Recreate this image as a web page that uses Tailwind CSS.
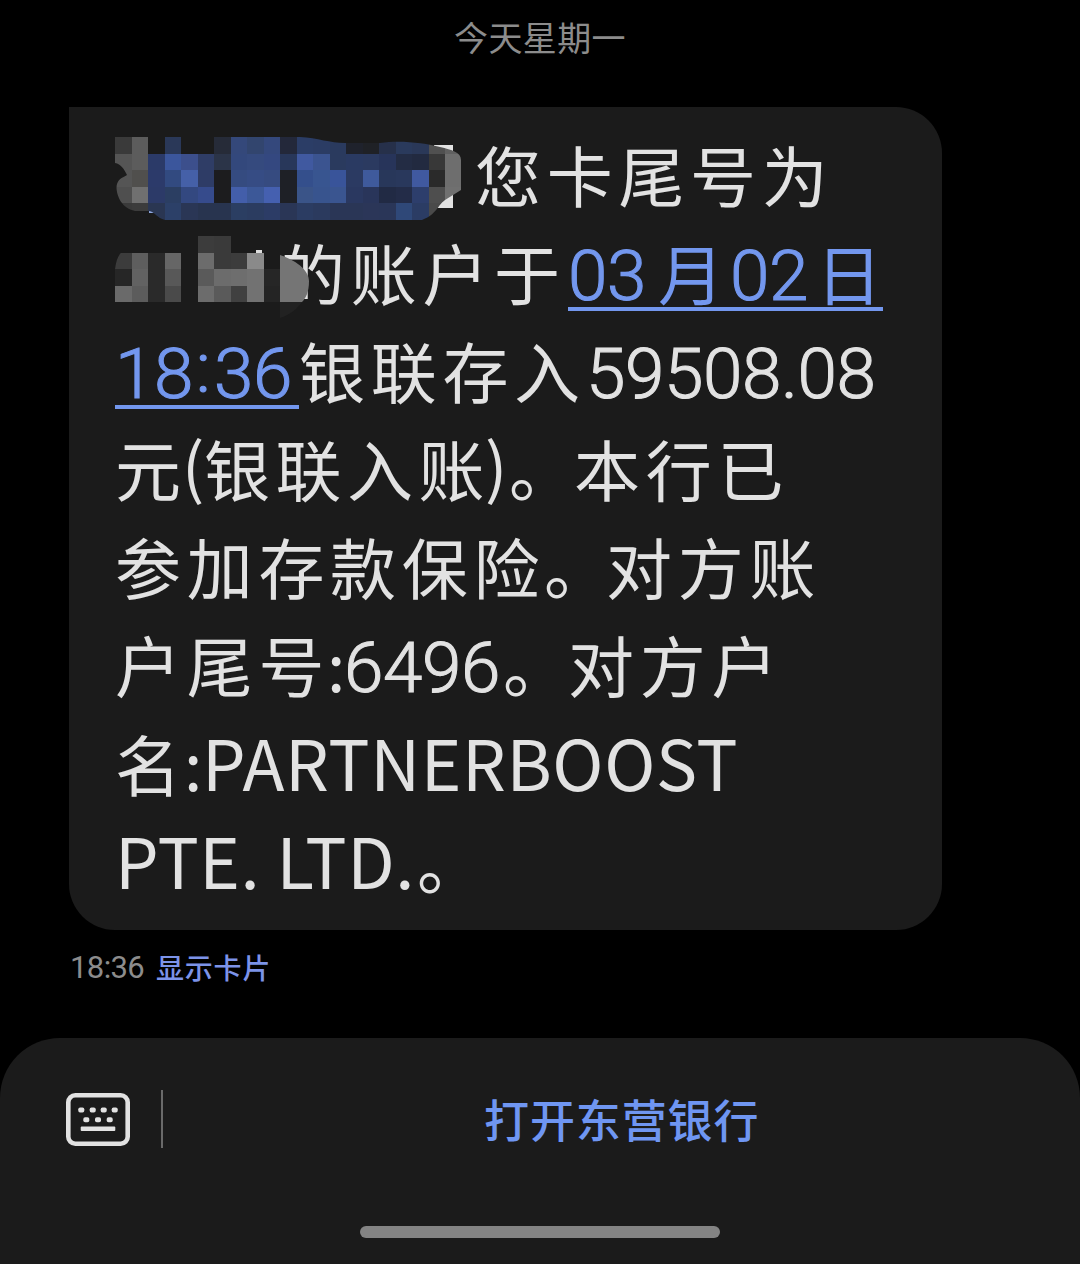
<!DOCTYPE html>
<html lang="zh-CN">
  <head>
    <meta charset="UTF-8" />
    <title>短信</title>
    <script src="https://cdn.jsdelivr.net/npm/@tailwindcss/browser@4"></script>
    <meta name="viewport" content="width=device-width, initial-scale=1.0" />
    <style>
      body { font-family: "Noto Sans CJK SC", sans-serif; }
      .num { font-family: Roboto, sans-serif; font-size: 71px; font-weight: 300; letter-spacing: -0.4px; -webkit-text-stroke: 1.1px currentColor; }
    </style>
  </head>
  <body class="bg-black">
    <div class="w-[1080px] h-[1264px] flex flex-col overflow-hidden">
      <!-- Date -->
      <div class="h-[107px] pt-[12px] text-center text-[34px] leading-[50px] tracking-[0.4px] text-[#8c8c8c]">今天星期一</div>

      <!-- Message bubble -->
      <div class="relative ml-[69px] w-[873px] h-[823px] pt-[17px] pl-[46px] rounded-[46px] rounded-tl-none bg-[#1b1b1b] text-[#e2e2e2] text-[66px] leading-[98px] tracking-[5.7px] whitespace-nowrap *:h-[98px]">
        <div class="flex items-baseline">
          <span class="ml-[360px]">您卡尾号为</span>
        </div>
        <div class="flex items-baseline">
          <span class="ml-[164px] w-[289px] shrink-0">的账户于</span>
          <span class="relative w-[315px] shrink-0 flex items-baseline text-[#7397ee]">
            <span class="num w-[90px]">03</span>
            <span class="w-[72px]">月</span>
            <span class="num w-[86px]">02</span>
            <span class="w-[67px]">日</span>
            <i class="absolute left-0 bottom-[14px] w-full h-[4px] bg-[#7397ee]"></i>
          </span>
        </div>
        <div class="flex items-baseline">
          <span class="relative w-[184px] shrink-0 flex items-baseline text-[#7397ee]">
            <span class="num w-[77px]">18</span>
            <span class="num relative -top-[6px] w-[22px] text-center">:</span>
            <span class="num">36</span>
            <i class="absolute left-0 bottom-[14px] w-full h-[4px] bg-[#7397ee]"></i>
          </span>
          <span class="w-[287px] shrink-0">银联存入</span>
          <span class="num">59508.08</span>
        </div>
        <div class="flex items-baseline">
          <span class="w-[67px] tracking-normal">元</span>
          <span class="relative -top-[4px] w-[22px] tracking-[-1px]">(</span>
          <span class="w-[281px] tracking-[5.5px]">银联入账</span>
          <span class="relative -top-[4px] w-[24px] tracking-normal">)</span>
          <span class="w-[65px] tracking-[-1px]">。</span>
          <span>本行已</span>
        </div>
        <div class="flex items-baseline">
          <span class="w-[429px]">参加存款保险</span>
          <span class="w-[62px] tracking-[-4px]">。</span>
          <span>对方账</span>
        </div>
        <div class="flex items-baseline">
          <span class="w-[212px]">户尾号</span>
          <span class="w-[17px] tracking-[-1px]">:</span>
          <span class="num w-[159px]">6496</span>
          <span class="w-[65px] tracking-[-1px]">。</span>
          <span>对方户</span>
        </div>
        <div class="flex items-baseline">
          <span class="w-[69px] tracking-normal">名</span>
          <span class="w-[18px] tracking-[-1px]">:</span>
          <span class="text-[69px] tracking-[0.6px]">PARTNERBOOST</span>
        </div>
        <div class="flex items-baseline">
          <span class="w-[302px] text-[69px] tracking-[0.6px]">PTE. LTD.</span>
          <span>。</span>
        </div>

        <!-- Pixelated areas over the sender and the card number -->
        <svg class="absolute left-[46px] top-[16px] w-[360px]" style="height: 200px" viewBox="115 123 360 200">
          <clipPath id="clipName">
            <path d="M115 137H300C318 138 330 143 345 143H380C400 140 425 143 440 147C452 150 461 152 461 160V190L445 200C437 206 437 214 422 220H165C157 218 155 212 149 211H135C119 208 115 190 117 184C119 178 124 177 127 175C124 169 121 164 115 163Z" />
          </clipPath>
          <clipPath id="clipCard">
            <path d="M115 269C117 254 122 249 132 249H180L197 252V236H231V252H280V255C300 262 309 272 309 281C309 292 306 298 302 302H115Z" />
          </clipPath>
          <path d="M434 145H453V208H436Z" fill="#e2e2e2" />
          <path d="M149 211h5v2h-5z" fill="#8fa8e0" />
          <path d="M256 250h6v3h-6z" fill="#dddddd" />
          <path d="M280 302h22C298 308 290 315 280 318z" fill="#222222" />
          <g id="mosaicName" clip-path="url(#clipName)"></g>
          <g id="mosaicCard" clip-path="url(#clipCard)"></g>
        </svg>
      </div>

      <!-- Time -->
      <div class="h-[108px] pl-[70px] pt-[16px] flex leading-[42px]">
        <span class="mt-[1px] w-[86px] font-[Roboto] text-[31px] tracking-[-0.6px] text-[#8c8c8c]">18:36</span>
        <span class="text-[28px] tracking-[0.8px] font-medium text-[#7c93e8]">显示卡片</span>
      </div>

      <!-- Bottom bar -->
      <div class="flex-1 rounded-t-[60px] bg-[#1b1b1b] flex flex-col items-center">
        <div class="w-full h-[188px] pt-[52px] pl-[66px] flex items-start">
          <svg class="w-[64px] h-[53px] mt-[2.5px]" viewBox="0 0 64 53" fill="#e2e2e2">
            <rect x="2.3" y="2.3" width="59.4" height="48.4" rx="7" fill="none" stroke="#e2e2e2" stroke-width="4.6" />
            <rect x="12.3" y="14.5" width="6" height="5" rx="1.8" />
            <rect x="23.7" y="14.5" width="6" height="5" rx="1.8" />
            <rect x="34.7" y="14.5" width="6" height="5" rx="1.8" />
            <rect x="45.7" y="14.5" width="6" height="5" rx="1.8" />
            <rect x="17.3" y="24.2" width="6" height="5" rx="1.8" />
            <rect x="29" y="24.2" width="6" height="5" rx="1.8" />
            <rect x="40.7" y="24.2" width="6" height="5" rx="1.8" />
            <rect x="14.7" y="33.5" width="34.6" height="4.6" rx="1" />
          </svg>
          <div class="w-[2px] h-[58px] ml-[31px] bg-[#6a6a6a]"></div>
          <span class="-mt-[1px] ml-[321px] text-[45px] leading-[60px] tracking-[0.9px] font-medium text-[#6f96f2]">打开东营银行</span>
        </div>
        <div class="w-[360px] h-[12px] rounded-full bg-[#848484]"></div>
      </div>
    </div>

    <script>
      const cell = 16.5;
      const nameRows = [
        '3a3a3a 5c5c5c - 2a3858 - - 262b38 34487a 32456e 34487c 23283a 2b3d66 2b3c64 2a3a5e 1f222c 1f2126 26304a 2a3a5c 2a3858 505050 606060',
        '555555 5c5c5c 2b3a68 3b569c 3c4f8c 2f3d66 2b3448 33487c 354a7e 344880 28375a 4059a0 3b5490 2a3a5e 2a3a62 2b3a60 27345a 232c44 222a40 383838 6e6e6e',
        '555555 504f4d 2c3a6a 324a80 4560a8 2e3c66 1c1c1e 354b80 364c84 364b80 1e2026 344f8c 385590 39549a 2b3a62 3f5a9c 28375a 29385c 4059a0 2a2a2a 6e6e6e',
        '4f4f4f 707070 2c3a68 2b3e62 334880 364b8c 1c1c1e 435eaa 3c5898 4560b0 1e2026 3a5488 38548e 3a5590 2a3860 29355a 212a44 232c48 2d3e6c 4e4e4e 707070',
        '3a3a3a 3c3c3c 2a3652 2c4068 2a3655 28344f 28344f 2b3e62 2b3c60 2c3c66 2a3656 2b3c62 2b3a5e 2a3656 2a3656 2b3658 2a3658 2f4878 2b3c64 4a4a4a 4a4a4a'
      ];
      const cardRows = [
        '- - - - - 3c3c3c 3a3a3a - - - - -',
        '3c3c3c 5e5e5e 2a2a2a 666666 - 6c6c6c 3a3a3a 3c3c3c 8a8a8a - 757575 757575',
        '262626 626262 2a2a2a 585858 - 5a5a5a 6c6c6c 6e6e6e 727272 262626 757575 757575',
        '6a6a6a 5c5c5c 2a2a2a 4a4a4a - 6c6c6c 5a5a5a 404040 727272 242424 757575 757575'
      ];

      // One rect per colour, '-' leaves the cell empty
      function drawMosaic(id, rows, x0, y0) {
        document.getElementById(id).innerHTML = rows.map((row, r) =>
          row.split(' ').map((c, i) => c === '-' ? '' :
            `<rect x="${x0 + i * cell}" y="${y0 + r * cell}" width="${cell}" height="${cell}" fill="#${c}" shape-rendering="crispEdges" />`
          ).join('')
        ).join('');
      }

      drawMosaic('mosaicName', nameRows, 115, 137.3);
      drawMosaic('mosaicCard', cardRows, 115, 236);
    </script>
  </body>
</html>
